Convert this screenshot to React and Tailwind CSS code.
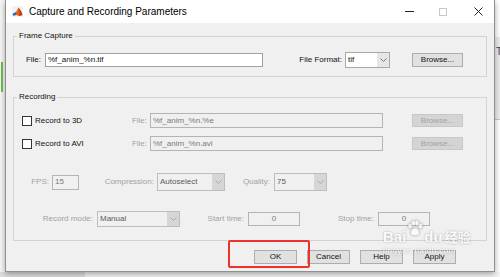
import React from 'react'

const font = { fontFamily: '"Liberation Sans", Arial, sans-serif' }

function Chevron({ color = '#8a8a8a' }) {
  return (
    <svg width="7" height="4" viewBox="0 0 7 4">
      <path d="M0.5 0.5 L3.5 3.5 L6.5 0.5" fill="none" stroke={color} strokeWidth="1" />
    </svg>
  )
}

function Combo({ w, h, value, disabled }) {
  return (
    <div
      className={`flex shrink-0 border ${disabled ? 'border-[#bdbdbd] bg-[#f0f0f0]' : 'border-[#a8a8a8] bg-white'}`}
      style={{ width: w, height: h }}
    >
      <span className={`flex-1 pl-[2px] leading-none flex items-center ${disabled ? 'text-[#5a5a5a]' : 'text-[#111]'}`}>
        {value}
      </span>
      <span className={`w-[12px] flex items-center justify-center ${disabled ? 'bg-[#d6d6d6]' : 'bg-[#e6e6e6]'}`}>
        <Chevron color={disabled ? '#a8a8a8' : '#777'} />
      </span>
    </div>
  )
}

function Input({ w, h, value, disabled, center }) {
  return (
    <div
      className={`flex items-center shrink-0 border leading-none ${center ? 'justify-center' : 'pl-[2px]'} ${
        disabled ? 'border-[#b4b4b4] bg-[#f0f0f0] text-[#7a7a7a]' : 'border-[#a0a0a0] bg-white text-[#111]'
      }`}
      style={{ width: w, height: h }}
    >
      {value}
    </div>
  )
}

function Btn({ children, disabled, h = 14 }) {
  return (
    <div
      className={`w-[51px] flex items-center justify-center border leading-none shrink-0 ${
        disabled ? 'bg-[#d4d4d4] border-[#c8c8c8] text-[#a3a3a3]' : 'bg-[#e1e1e1] border-[#adadad] text-[#111]'
      }`}
      style={{ height: h }}
    >
      {children}
    </div>
  )
}

function DlgButton({ children }) {
  return (
    <div className="w-[43px] h-[14px] flex items-center justify-center bg-[#e1e1e1] border border-[#adadad] text-[#111] leading-none">
      {children}
    </div>
  )
}

function Label({ w, children, disabled }) {
  return (
    <span
      className={`shrink-0 text-right leading-none ${disabled ? 'text-[#a2a2a2]' : 'text-[#111]'}`}
      style={{ width: w }}
    >
      {children}
    </span>
  )
}

function MatlabIcon() {
  return (
    <svg width="11" height="11" viewBox="0 0 11 11">
      <rect x="0" y="0" width="11" height="11" fill="#eef3f8" />
      <path d="M0.5 8 L4 6 L6.5 1.5 L9 5 L10.5 9 L7 10 L4 9 Z" fill="#e0661d" />
      <path d="M0.5 8 L4 6 L4 9 L1.5 10 Z" fill="#2a6fb5" />
      <path d="M6.5 1.5 L7.5 5 L7 10 L10.5 9 L9 5 Z" fill="#c23b12" />
    </svg>
  )
}

function Paw() {
  return (
    <svg width="18" height="18" viewBox="0 0 18 18" className="mb-[6px]">
      <g fill="#fff" stroke="#c9c9c9" strokeWidth="0.8">
        <ellipse cx="4" cy="6" rx="2" ry="2.5" />
        <ellipse cx="7.5" cy="3" rx="2" ry="2.5" />
        <ellipse cx="11" cy="3" rx="2" ry="2.5" />
        <ellipse cx="14.5" cy="6" rx="2" ry="2.5" />
        <path d="M9 8 C12 8 14 12 13 14 C12 16 6 16 5 14 C4 12 6 8 9 8 Z" />
      </g>
    </svg>
  )
}

function CheckRow({ label, file }) {
  return (
    <div className="flex items-center h-[15px]">
      <div className="w-[108px] flex items-center shrink-0">
        <span className="w-[10px] h-[10px] border border-[#333] bg-white shrink-0" />
        <span className="ml-[3px] text-[#111] leading-none">{label}</span>
      </div>
      <Label w={17} disabled>File:</Label>
      <div className="ml-[3px]">
        <Input w={233} h={15} value={file} disabled />
      </div>
      <div className="ml-[29px]">
        <Btn disabled h={13}>Browse...</Btn>
      </div>
    </div>
  )
}

export default function App() {
  return (
    <div className="relative w-[500px] h-[277px] overflow-hidden bg-white text-[8px]" style={font}>
      <div className="flex h-[272px]">
        {/* left edge of the desktop */}
        <div className="w-[5px] flex flex-col bg-[#f7f7f7]">
          <div className="h-[62px]" />
          <div className="ml-[1px] w-[2px] h-[30px] bg-[#6cc24a]" />
        </div>

        {/* dialog window */}
        <div className="w-[490px] flex flex-col border-x border-b border-[#8f8f8f] bg-[#f0f0f0] shadow-[0_2px_6px_rgba(0,0,0,0.35)] z-10">
          <div className="h-[23px] bg-white flex items-center pl-[6px]">
            <MatlabIcon />
            <span className="ml-[6px] text-[10px] text-black leading-none">Capture and Recording Parameters</span>
            <div className="ml-auto flex items-center">
              <span className="w-[9px] h-px bg-[#222]" />
              <span className="ml-[25px] w-[8px] h-[8px] border border-[#c8c8c8]" />
              <svg className="ml-[27px] mr-[11px]" width="9" height="9" viewBox="0 0 9 9">
                <path d="M0.5 0.5 L8.5 8.5 M8.5 0.5 L0.5 8.5" stroke="#222" strokeWidth="1" />
              </svg>
            </div>
          </div>

          <div className="flex-1 flex flex-col px-[7px] pt-[8px]">
            <fieldset className="border border-[#d3d3d3] pt-[11px] pb-[8px]">
              <legend className="ml-[3px] px-[2px] leading-[10px] text-[#111]">Frame Capture</legend>
              <div className="flex items-center h-[16px]">
                <Label w={27}>File:</Label>
                <div className="ml-[4px]">
                  <Input w={218} h={14} value="%f_anim_%n.tif" />
                </div>
                <Label w={79}>File Format:</Label>
                <div className="ml-[3px]">
                  <Combo w={45} h={16} value="tif" />
                </div>
                <div className="ml-[22px]">
                  <Btn>Browse...</Btn>
                </div>
              </div>
            </fieldset>

            <fieldset className="mt-[15px] border border-[#d3d3d3] pt-[11px] pb-[13px] pl-[8px]">
              <legend className="ml-[-5px] px-[2px] leading-[10px] text-[#111]">Recording</legend>
              <CheckRow label="Record to 3D" file="%f_anim_%n.%e" />
              <div className="mt-[8px]">
                <CheckRow label="Record to AVI" file="%f_anim_%n.avi" />
              </div>

              <div className="mt-[22px] ml-[-8px] flex items-center h-[18px]">
                <Label w={35} disabled>FPS:</Label>
                <div className="ml-[3px]">
                  <Input w={27} h={15} value="15" disabled />
                </div>
                <Label w={75} disabled>Compression:</Label>
                <div className="ml-[3px]">
                  <Combo w={68} h={18} value="Autoselect" disabled />
                </div>
                <Label w={45} disabled>Quality:</Label>
                <div className="ml-[4px]">
                  <Combo w={53} h={18} value="75" disabled />
                </div>
              </div>

              <div className="mt-[20px] ml-[-8px] flex items-center h-[16px]">
                <Label w={79} disabled>Record mode:</Label>
                <div className="ml-[4px]">
                  <Combo w={83} h={16} value="Manual" disabled />
                </div>
                <Label w={64} disabled>Start time:</Label>
                <div className="ml-[4px]">
                  <Input w={52} h={14} value="0" disabled center />
                </div>
                <Label w={74} disabled>Stop time:</Label>
                <div className="ml-[4px]">
                  <Input w={52} h={14} value="0" disabled center />
                </div>
              </div>
            </fieldset>

            <div className="mt-[9px] flex justify-end gap-[10px] pr-[31px]">
              <DlgButton>OK</DlgButton>
              <DlgButton>Cancel</DlgButton>
              <DlgButton>Help</DlgButton>
              <DlgButton>Apply</DlgButton>
            </div>
          </div>
        </div>

        {/* right edge of the desktop */}
        <div className="w-[5px] flex flex-col">
          <div className="h-[37px]" />
          <div className="h-[83px] bg-[#ececec] border-b border-[#c8c8c8] overflow-hidden">
            <span className="block mt-[10px] ml-[1px] text-[10px] leading-none text-[#444]">T</span>
          </div>
        </div>
      </div>
      <div className="flex h-[5px]">
        <div className="w-[85px] bg-[#dedede]" />
        <div className="flex-1 bg-[#f4f4f4]" />
      </div>

      {/* watermark */}
      <div className="absolute left-[383px] top-[220px] z-20 flex flex-col items-start text-white opacity-70 drop-shadow-[0_0_1px_rgba(0,0,0,0.4)] pointer-events-none">
        <div className="flex items-end text-[15px] font-bold leading-none" style={{ fontFamily: '"Liberation Sans", "Noto Sans CJK SC", sans-serif' }}>
          <span>Bai</span>
          <Paw />
          <span>du</span>
          <span className="ml-[2px] text-[13px]">经验</span>
        </div>
        <span className="mt-[3px] text-[8px] tracking-[0.5px] leading-none">jingyan.baidu.com</span>
      </div>

      {/* highlight */}
      <div className="absolute left-[228px] top-[240px] w-[82px] h-[28px] border-2 border-[#f0302a] rounded-[2px] z-20" />
    </div>
  )
}
